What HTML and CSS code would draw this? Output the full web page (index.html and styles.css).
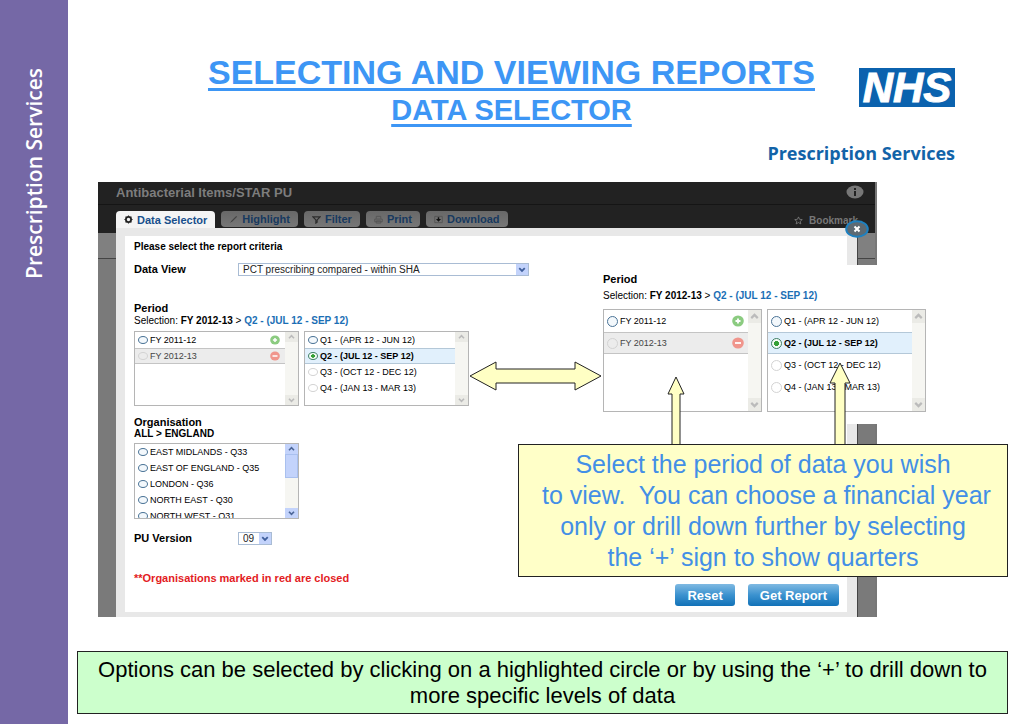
FILE: index.html
```html
<!DOCTYPE html>
<html lang="en">
<head>
<meta charset="utf-8">
<title>Selecting and viewing reports</title>
<link rel="stylesheet" href="styles.css">
</head>
<body>
<svg class="defs" aria-hidden="true">
  <symbol id="up" viewBox="0 0 12 12"><path d="M3 7.5 6 4.5l3 3" fill="none" stroke="currentColor" stroke-width="2"/></symbol>
  <symbol id="down" viewBox="0 0 12 12"><path d="M3 4.5l3 3 3-3" fill="none" stroke="currentColor" stroke-width="2"/></symbol>
  <symbol id="plus" viewBox="0 0 12 12"><ellipse cx="6" cy="6" rx="5.800" ry="5.500" fill="#8bcb80"/><path d="M6 3.500v5M3.500 6h5" stroke="#fff" stroke-width="1.800"/></symbol>
  <symbol id="minus" viewBox="0 0 12 12"><ellipse cx="6" cy="6" rx="5.800" ry="5.500" fill="#f0958c"/><path d="M3 6h6" stroke="#fff" stroke-width="1.800"/></symbol>
</svg>
<aside class="side"><span class="side-text">Prescription Services</span></aside>
<main class="slide">
  <header class="head">
    <h1 class="title">SELECTING AND VIEWING REPORTS<span class="subtitle">DATA SELECTOR</span></h1>
    <div class="brand"><span class="nhs">NHS</span><span class="brand-name">Prescription Services</span></div>
  </header>

  <section class="stage">
    <div class="app">
      <div class="app-bar"><span>Antibacterial Items/STAR PU</span>
        <svg class="info" viewBox="0 0 18 14"><ellipse cx="9" cy="7" rx="8.5" ry="6.5" fill="#777"/><path d="M9 6v5M9 3v2" stroke="#222" stroke-width="2"/></svg>
      </div>
      <nav class="tabs">
        <button class="tab active"><svg class="ticon" viewBox="0 0 10 10"><circle cx="5" cy="5" r="2.900" fill="none" stroke="#222" stroke-width="2"/><path d="M5 .5V2M5 8v1.500M.5 5H2M8 5h1.500M1.800 1.800l1 1M7.200 7.200l1 1M8.200 1.800l-1 1M2.800 7.200l-1 1" stroke="#222" stroke-width="1.200"/></svg>Data Selector</button>
        <button class="tab"><svg class="ticon" viewBox="0 0 10 10"><path d="M1 9l2-3 5-5 1 1-5 5z" fill="#444"/></svg>Highlight</button>
        <button class="tab"><svg class="ticon" viewBox="0 0 10 10"><path d="M1 2h8L5.7 5.5V8L4.3 9V5.5z" fill="none" stroke="#2c2c2c" stroke-width="1.3"/></svg>Filter</button>
        <button class="tab"><svg class="ticon" viewBox="0 0 10 10"><path d="M2.5 4V1.5h5V4M.8 4.5h8.4v3H.8zM2.5 6.5h5V9h-5z" fill="none" stroke="#555"/></svg>Print</button>
        <button class="tab"><svg class="ticon" viewBox="0 0 10 10"><path d="M.8 1.5h8.4v7H.8z" fill="none" stroke="#555"/><path d="M4.2 2.5h1.6v2h2L5 7.5 2.2 4.500h2z" fill="#111"/></svg>Download</button>
        <a class="bookmark" href="#"><svg class="ticon" viewBox="0 0 10 10"><path d="M5 1l1.200 2.700 3 .3-2.300 1.900.7 2.900L5 7.300 2.400 8.800l.7-2.900L.8 4l3-.3z" fill="none" stroke="#888" stroke-width=".8"/></svg>Bookmark</a>
      </nav>
      <div class="panel">
        <button class="close" aria-label="Close"><svg viewBox="0 0 24 18" width="24" height="18"><ellipse cx="12" cy="9" rx="10.800" ry="7.800" fill="#5d6a73" stroke="#1d80c0" stroke-width="2"/><path d="M9.500 6.500l5 5M14.500 6.500l-5 5" stroke="#fff" stroke-width="2"/></svg></button>
        <form class="form">
          <p class="intro">Please select the report criteria</p>
          <div class="field view"><label for="view">Data View</label>
            <span class="pick wide"><select id="view"><option>PCT prescribing compared - within SHA</option></select><svg class="drop"><use href="#down"/></svg></span></div>
          <h2 class="label">Period</h2>
          <p class="selection">Selection: <b>FY 2012-13</b> &gt; <b class="blue">Q2 - (JUL 12 - SEP 12)</b></p>
          <div class="lists">
            <div class="list">
              <div class="rows">
                <div class="row"><label><input type="radio" name="y">FY 2011-12</label><svg class="sign" preserveAspectRatio="none"><use href="#plus"/></svg></div>
                <div class="row picked"><label><input type="radio" name="y" disabled>FY 2012-13</label><svg class="sign"><use href="#minus"/></svg></div>
              </div>
              <div class="scroll"><svg><use href="#up"/></svg><svg><use href="#down"/></svg></div>
            </div>
            <div class="list">
              <div class="rows">
                <div class="row"><label><input type="radio" name="q">Q1 - (APR 12 - JUN 12)</label></div>
                <div class="row on"><label><input type="radio" name="q" checked>Q2 - (JUL 12 - SEP 12)</label></div>
                <div class="row"><label><input type="radio" name="q" disabled>Q3 - (OCT 12 - DEC 12)</label></div>
                <div class="row"><label><input type="radio" name="q" disabled>Q4 - (JAN 13 - MAR 13)</label></div>
              </div>
              <div class="scroll"><svg><use href="#up"/></svg><svg><use href="#down"/></svg></div>
            </div>
          </div>
          <h2 class="label org">Organisation</h2>
          <p class="path">ALL &gt; ENGLAND</p>
          <div class="lists">
            <div class="list regions">
              <div class="rows">
                <div class="row"><label><input type="radio" name="o">EAST MIDLANDS - Q33</label></div>
                <div class="row"><label><input type="radio" name="o">EAST OF ENGLAND - Q35</label></div>
                <div class="row"><label><input type="radio" name="o">LONDON - Q36</label></div>
                <div class="row"><label><input type="radio" name="o">NORTH EAST - Q30</label></div>
                <div class="row"><label><input type="radio" name="o">NORTH WEST - Q31</label></div>
              </div>
              <div class="scroll live"><svg><use href="#up"/></svg><i class="thumb"></i><svg><use href="#down"/></svg></div>
            </div>
          </div>
          <div class="field version"><label for="pu">PU Version</label>
            <span class="pick"><select id="pu"><option>09</option></select><svg class="drop"><use href="#down"/></svg></span></div>
          <p class="warn">**Organisations marked in red are closed</p>
          <div class="actions"><button type="button" class="btn">Reset</button><button type="button" class="btn">Get Report</button></div>
        </form>
      </div>
    </div>

    <div class="inset">
      <h2 class="label">Period</h2>
      <p class="selection">Selection: <b>FY 2012-13</b> &gt; <b class="blue">Q2 - (JUL 12 - SEP 12)</b></p>
      <div class="lists">
        <div class="list">
          <div class="rows">
            <div class="row"><label><input type="radio" name="iy">FY 2011-12</label><svg class="sign"><use href="#plus"/></svg></div>
            <div class="row picked"><label><input type="radio" name="iy" disabled>FY 2012-13</label><svg class="sign"><use href="#minus"/></svg></div>
          </div>
          <div class="scroll"><svg><use href="#up"/></svg><svg><use href="#down"/></svg></div>
        </div>
        <div class="list">
          <div class="rows">
            <div class="row"><label><input type="radio" name="iq">Q1 - (APR 12 - JUN 12)</label></div>
            <div class="row on"><label><input type="radio" name="iq" checked>Q2 - (JUL 12 - SEP 12)</label></div>
            <div class="row"><label><input type="radio" name="iq" disabled>Q3 - (OCT 12 - DEC 12)</label></div>
            <div class="row"><label><input type="radio" name="iq" disabled>Q4 - (JAN 13 - MAR 13)</label></div>
          </div>
          <div class="scroll"><svg><use href="#up"/></svg><svg><use href="#down"/></svg></div>
        </div>
      </div>
    </div>

    <svg class="arrow link" viewBox="0 0 134 30"><path d="M1 15 27 1v7h79V1l26 14-26 14v-7H27v7z"/></svg>
    <svg class="arrow first" viewBox="0 0 18 70"><path d="M5 70V18H1L9 1l8 17h-4v52"/></svg>
    <svg class="arrow second" viewBox="0 0 22 84"><path d="M6 84V21H1L11 1l10 20h-5v63"/></svg>
    <p class="callout">Select the period of data you wish<br>&nbsp;to view.&nbsp; You can choose a financial year<br>only or drill down further by selecting<br>the ‘+’ sign to show quarters</p>
  </section>

  <p class="note">Options can be selected by clicking on a highlighted circle or by using the ‘+’ to drill down to more specific levels of data</p>
</main>
</body>
</html>
```
FILE: styles.css
```css
* { box-sizing: border-box; }
body {
  margin: 0;
  min-height: 100vh;
  display: flex;
  background: #fff;
  color: #000;
  font-family: "Liberation Sans", Arial, sans-serif;
}
h1, h2, p { margin: 0; }
button, select { font: inherit; border: 0; padding: 0; }
.defs { position: absolute; width: 0; height: 0; }

.side {
  width: 68px;
  flex: none;
  background: #7568a6;
  display: flex;
  justify-content: center;
  padding-top: 68px;
}
.side-text {
  writing-mode: vertical-rl;
  transform: rotate(180deg);
  align-self: flex-start;
  color: #fff;
  font: 600 21px/28px "Open Sans", "Noto Sans", sans-serif;
}

.slide { flex: 1; min-width: 0; display: flex; flex-direction: column; }
.head {
  display: grid;
  height: 182px;
  padding: 52px 69px 0 0;
}
.title {
  grid-area: 1 / 1;
  justify-self: center;
  font-size: 34px;
  line-height: 40px;
  text-align: center;
  color: #3d96f5;
  text-decoration: underline;
  text-decoration-thickness: 3px;
  text-decoration-skip-ink: none;
  text-underline-offset: 4px;
}
.subtitle { display: block; font-size: 29px; line-height: 36px; }
.brand {
  grid-area: 1 / 1;
  justify-self: end;
  display: flex;
  flex-direction: column;
  align-items: flex-end;
  gap: 34px;
  padding-top: 16px;
}
.nhs {
  width: 96px;
  background: #0b62ae;
  color: #fff;
  text-align: center;
  font-size: 42px;
  font-weight: bold;
  font-style: italic;
  line-height: 39px;
  -webkit-text-stroke: 1px #fff;
}
.brand-name {
  color: #1263a8;
  font: 700 18px/24px "Open Sans", "Noto Sans", sans-serif;
}

.stage { position: relative; padding: 0 147px 0 30px; }
.app {
  padding-right: 17px;
  padding-left: 18px;
  border-right: 2px solid #777;
  background: linear-gradient(#222 51px, #808080 51px, #808080 76px, #444 76px, #444 77px, #7a7a7a 77px);
}
.app-bar {
  display: flex;
  justify-content: space-between;
  align-items: center;
  height: 23px;
  margin: 0 -17px 0 -18px;
  padding: 0 11px 2px 18px;
  border-bottom: 1px solid #151515;
  color: #7d7d7d;
  font-size: 13px;
  font-weight: bold;
}
.info { width: 18px; height: 14px; }
.tabs { display: flex; gap: 6px; height: 23px; padding-top: 6px; }
.tab {
  display: flex;
  align-items: center;
  gap: 4px;
  height: 16px;
  padding: 0 8px;
  border-radius: 4px;
  background: linear-gradient(#686868, #777);
  color: #17395f;
  font-size: 11px;
  font-weight: bold;
}
.tab.active { height: 17px; border-radius: 4px 4px 0 0; background: #f4f4f4; color: #174f8c; }
.ticon { width: 9px; height: 9px; flex: none; }
.bookmark {
  display: flex;
  align-items: center;
  gap: 6px;
  height: 18px;
  margin-left: auto;
  color: #777;
  font-size: 10px;
  font-weight: bold;
  text-decoration: none;
}
.panel {
  position: relative;
  padding: 8px 10px 5px 9px;
  background: #e8e8e8;
  border-right: 1px solid #444;
}
.close { position: absolute; top: -8px; right: -12px; width: 24px; height: 18px; background: none; }
.close svg { display: block; }

.form { padding: 4px 8px 6px 9px; background: #fff; }
.intro { font-size: 10px; font-weight: bold; line-height: 14px; }
.field { display: flex; align-items: center; height: 14px; font-size: 11px; font-weight: bold; }
.field label { width: 104px; line-height: 12px; }
.view { margin-top: 8px; }
.version { margin-top: 12px; }
.pick {
  display: flex;
  width: 34px;
  height: 13px;
  border: 1px solid #a9bcd4;
  background: #fff;
  font-size: 10px;
  font-weight: normal;
}
.pick.wide { width: 291px; }
.pick select { flex: 1; min-width: 0; padding-left: 4px; appearance: none; background: none; line-height: 11px; color: #222; }
.drop { width: 12px; height: 11px; background: #c3d3fb; color: #3f5f9c; }
.label { margin-top: 26px; font-size: 11px; line-height: 12px; }
.label.org { margin-top: 10px; }
.selection { font-size: 10px; line-height: 14px; }
.blue { color: #1b6fb5; }
.path { font-size: 10px; font-weight: bold; line-height: 12px; }
.lists { display: flex; gap: 5px; margin-top: 3px; }
.list { display: flex; width: 165px; height: 75px; border: 1px solid #b5b5b5; overflow: hidden; }
.regions { height: 76px; }
.rows { flex: 1; min-width: 0; }
.row {
  display: flex;
  align-items: center;
  justify-content: space-between;
  height: 16px;
  padding: 0 4px 0 3px;
  font-size: 9px;
  white-space: nowrap;
}
.row label { display: flex; align-items: center; gap: 2px; }
.picked { background: #ececec; border: solid #c4c4c4; border-width: 1px 0; color: #444; }
.on { background: #e1f0fc; border: solid #b4c8d8; border-width: 1px 0; font-weight: bold; }
.row input {
  appearance: none;
  width: 10px;
  height: 8px;
  margin: 0;
  border: 1px solid #4a7396;
  border-radius: 50%;
  background: #f3f8fc;
}
.row input:disabled { border-color: #d3d3d3; background: none; }
.row input:checked { background: radial-gradient(closest-side, #35a035 50%, #f4fbf4 60%); border-color: #3f7f65; }
.sign { width: 12px; height: 10px; }
.scroll {
  display: flex;
  flex-direction: column;
  justify-content: space-between;
  width: 13px;
  background: #f6f6f2;
  color: #bbb;
}
.scroll svg { width: 13px; height: 10px; background: #ebebe6; }
.scroll.live { color: #4c6698; }
.scroll.live svg { background: #c3d3fb; }
.thumb { height: 24px; margin-bottom: auto; border: 1px solid #a9c0ee; background: #c3d3fb; }
.warn { margin-top: 28px; color: #e31b23; font-size: 11px; font-weight: bold; line-height: 11px; }
.actions { display: flex; justify-content: flex-end; gap: 13px; }
.btn {
  height: 22px;
  padding: 0 12px;
  border-radius: 3px;
  background: linear-gradient(#7fb9e2, #3b92cf 50%, #1272b8);
  color: #fff;
  font-size: 13px;
  font-weight: bold;
}

.inset {
  position: absolute;
  top: 83px;
  left: 534px;
  padding: 7px 1px 12px;
  background: #fff;
}
.inset .label { margin: 0; line-height: 14px; }
.inset .selection { font-size: 10px; line-height: 20px; }
.inset .list { width: 159px; height: 103px; }
.inset .row { height: 22px; font-size: 9px; }
.inset .row input { width: 11px; height: 11px; }
.inset .sign { height: 12px; }
.inset .scroll svg { height: 13px; }

.arrow { position: absolute; fill: #ffffc4; stroke: #222; stroke-width: 1; }
.link { left: 401px; top: 179px; width: 134px; height: 30px; }
.first { left: 599px; top: 194px; width: 18px; height: 70px; }
.second { left: 761px; top: 180px; width: 22px; height: 84px; }
.callout {
  position: absolute;
  top: 262px;
  left: 450px;
  right: 16px;
  padding: 4px 0 3px;
  border: 1px solid #222;
  background: #ffffc8;
  color: #438fe6;
  font-size: 25px;
  line-height: 31px;
  text-align: center;
}
.note {
  margin: 34px 16px 10px 9px;
  padding: 5px 16px 4px;
  border: 1px solid #222;
  background: #ccffcc;
  font-size: 22px;
  line-height: 26px;
  text-align: center;
}
```
